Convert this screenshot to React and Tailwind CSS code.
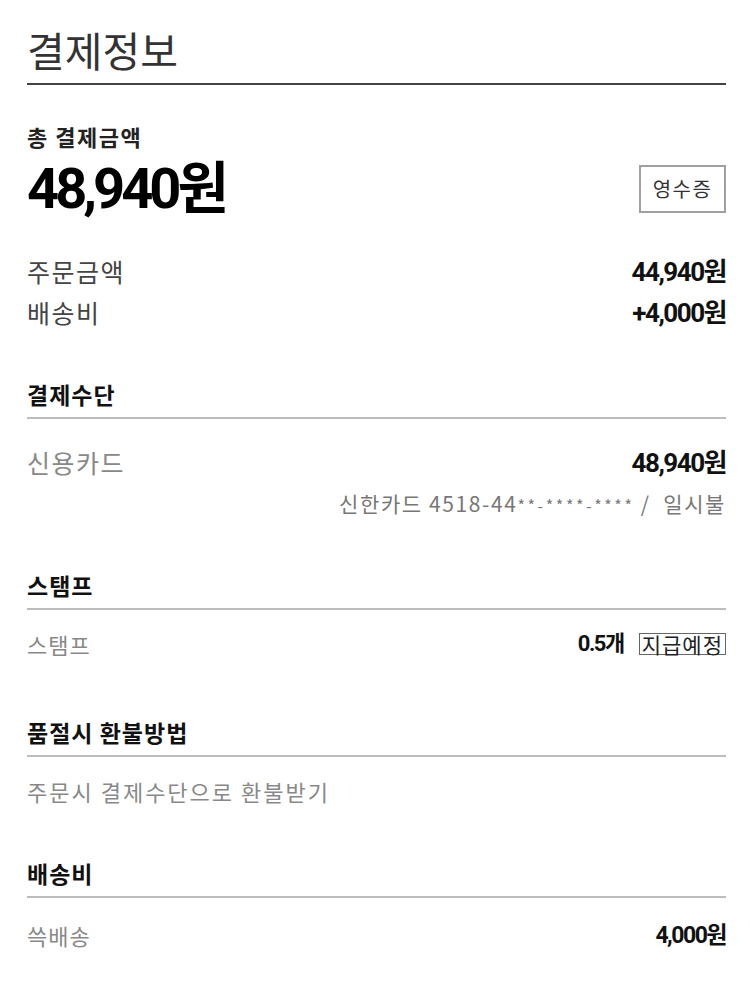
import React from 'react';

const KR = "font-['Noto_Sans_CJK_KR','Noto_Sans',sans-serif]";
const NUM = "font-['Roboto','Noto_Sans_CJK_KR',sans-serif]";

function Heading({ children, className = '' }) {
  return (
    <div className={className}>
      <h3 className="text-[23px] leading-none font-bold text-[#111] tracking-[1px]">{children}</h3>
      <div className="mt-[11px] h-[2px] bg-[#bdbdbd]" />
    </div>
  );
}

function Row({ label, value, labelClass, valueClass, extra, className = '' }) {
  return (
    <div className={`flex items-center justify-between ${className}`}>
      <span className={`leading-none ${labelClass}`}>{label}</span>
      <div className="flex items-center">
        <span className={`${NUM} font-bold leading-none text-[#111] ${valueClass}`}>{value}</span>
        {extra}
      </div>
    </div>
  );
}

export default function App() {
  return (
    <div className={`${KR} bg-white w-[750px] min-h-[985px] pl-[27px] pr-[24px] pt-[29px] pb-[30px]`}>
      <h1 className="text-[41px] leading-none font-normal text-[#333]">결제정보</h1>
      <div className="mt-[13px] h-[2px] bg-[#444]" />

      <p className="mt-[40px] text-[22px] leading-none font-bold text-[#222] tracking-[1.5px]">총 결제금액</p>
      <div className="mt-[14px] flex items-center justify-between h-[56px]">
        <span className={`${NUM} text-[56px] leading-none font-bold text-black tracking-[-4px]`}>48,940원</span>
        <button className="w-[87px] h-[48px] border-2 border-[#a0a0a0] text-[20px] text-[#333] leading-none tracking-[1.5px]">영수증</button>
      </div>

      <div className="mt-[34px]">
        <Row
          className="h-[41px]"
          label="주문금액"
          labelClass="text-[25px] text-[#444] tracking-[1.5px]"
          value="44,940원"
          valueClass="text-[26px] tracking-[-1.5px]"
        />
        <Row
          className="h-[41px]"
          label="배송비"
          labelClass="text-[25px] text-[#444] tracking-[1.5px]"
          value="+4,000원"
          valueClass="text-[26px] tracking-[-1.5px]"
        />
      </div>

      <Heading className="mt-[50px]">결제수단</Heading>
      <Row
        className="mt-[23px] h-[41px]"
        label="신용카드"
        labelClass="text-[25px] text-[#888] tracking-[1.5px]"
        value="48,940원"
        valueClass="text-[26px] tracking-[-1.5px]"
      />
      <p className="mt-[10px] text-right text-[21px] leading-none text-[#777] tracking-[1.6px]">
        신한카드 4518-44<span className="text-[16px] tracking-[2.6px]">**-****-****</span> /&nbsp; 일시불
      </p>

      <Heading className="mt-[60px]">스탬프</Heading>
      <Row
        className="mt-[13px] h-[42px]"
        label="스탬프"
        labelClass="text-[22px] text-[#888] tracking-[1px]"
        value="0.5개"
        valueClass="text-[22px] tracking-[-1.5px]"
        extra={
          <span className="ml-[15px] border border-[#666] px-[2px] h-[22px] flex items-center text-[21px] leading-none text-[#222] tracking-[1px]">지급예정</span>
        }
      />

      <Heading className="mt-[56px]">품절시 환불방법</Heading>
      <p className="mt-[23px] text-[22px] leading-none text-[#888] tracking-[2px]">주문시 결제수단으로 환불받기</p>

      <Heading className="mt-[60px]">배송비</Heading>
      <Row
        className="mt-[16px] h-[42px]"
        label="쓱배송"
        labelClass="text-[22px] text-[#888] tracking-[1px]"
        value="4,000원"
        valueClass="text-[23px] tracking-[-1.5px]"
      />
    </div>
  );
}
